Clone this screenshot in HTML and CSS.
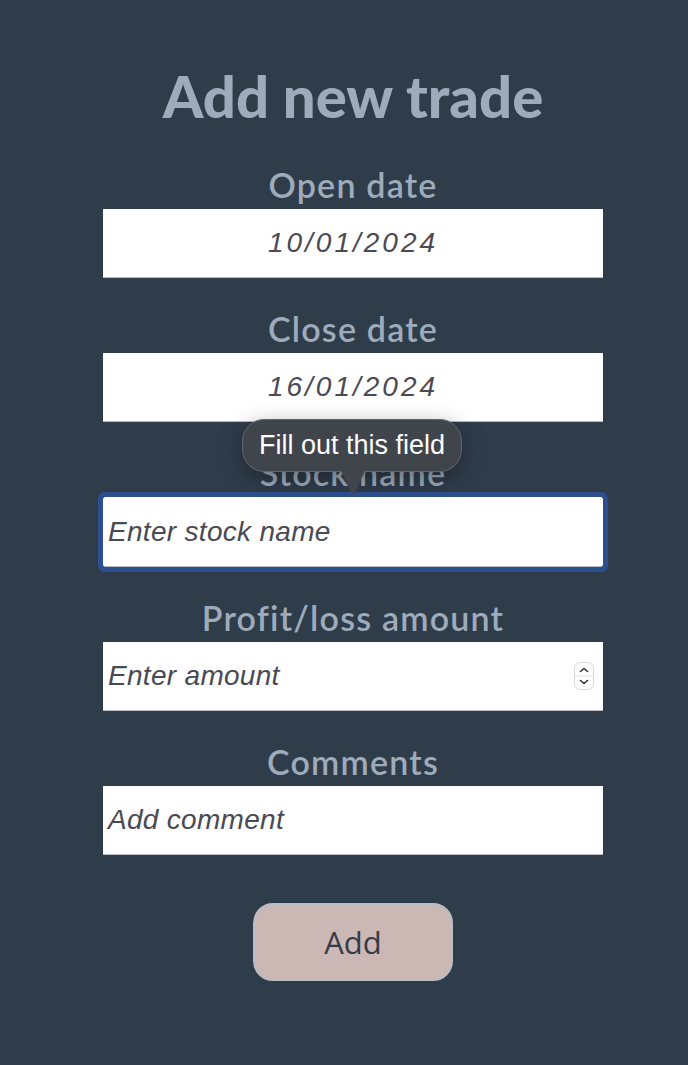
FILE: index.html
```html
<!DOCTYPE html>
<html>
<head>
<meta charset="utf-8">
<link rel="stylesheet" href="styles.css">
</head>
<body>
<main class="page">
  <form class="trade-form">
    <h1 class="title">Add new trade</h1>
    <div class="group">
      <label class="label">Open date</label>
      <div class="field field-date">10/01/2024</div>
    </div>
    <div class="group">
      <label class="label">Close date</label>
      <div class="field field-date">16/01/2024</div>
    </div>
    <div class="group group-tip">
      <label class="label">Stock name</label>
      <div class="field field-focus"><span class="placeholder">Enter stock name</span></div>
      <div class="tooltip"><span>Fill out this field</span><i class="tip-arrow"></i></div>
    </div>
    <div class="group">
      <label class="label">Profit/loss amount</label>
      <div class="field field-num">
        <span class="placeholder">Enter amount</span>
        <span class="spinner">
          <svg width="20" height="28" viewBox="0 0 20 28">
            <rect x="0.5" y="0.5" width="19" height="27" rx="6" fill="#fff" stroke="#d6d6d6"/>
            <line x1="1" y1="14" x2="19" y2="14" stroke="#e2e2e2"/>
            <path d="M6.5 9.5 L10 6.5 L13.5 9.5" fill="none" stroke="#333" stroke-width="1.6" stroke-linecap="round" stroke-linejoin="round"/>
            <path d="M6.5 18.5 L10 21.5 L13.5 18.5" fill="none" stroke="#333" stroke-width="1.6" stroke-linecap="round" stroke-linejoin="round"/>
          </svg>
        </span>
      </div>
    </div>
    <div class="group">
      <label class="label">Comments</label>
      <div class="field"><span class="placeholder">Add comment</span></div>
    </div>
    <button type="button" class="add-btn">Add</button>
  </form>
</main>
</body>
</html>
```

FILE: styles.css
```css
html, body {
  margin: 0;
  padding: 0;
  background: #2f3c4a;
}
.page {
  width: 670px;
  padding-left: 18px;
  padding-top: 60px;
  min-height: 1005px;
}
.trade-form {
  display: flex;
  flex-direction: column;
  align-items: center;
}
.title {
  margin: 0 0 8px 0;
  font-family: "Lato", sans-serif;
  font-weight: 900;
  font-size: 58px;
  line-height: 72px;
  color: #9eabbb;
}
.group {
  position: relative;
  width: 500px;
  display: flex;
  flex-direction: column;
  align-items: center;
  margin-bottom: 6px;
}
.label {
  font-family: "Lato", sans-serif;
  font-weight: 600;
  font-size: 34px;
  line-height: 1;
  height: 69px;
  box-sizing: border-box;
  padding-bottom: 7px;
  display: flex;
  align-items: flex-end;
  color: #9eabbb;
  letter-spacing: 1.2px;
}
.field {
  width: 500px;
  height: 69px;
  box-sizing: border-box;
  background: #fff;
  border-bottom: 1px solid #b9bcc2;
  display: flex;
  align-items: center;
  font-family: "Liberation Sans", Arial, sans-serif;
  font-style: italic;
  font-size: 28px;
  letter-spacing: 0.3px;
  color: #4a4a55;
  padding: 0 5px;
}
.field-date {
  justify-content: center;
  letter-spacing: 3px;
}
.field-focus {
  border-radius: 2px;
  outline: 5px solid #2e4f8f;
  outline-offset: 0;
  height: 70px;
}
.field-num {
  justify-content: space-between;
  padding-right: 9px;
}
.spinner {
  display: flex;
}
.placeholder {
  color: #4a4a55;
}
.tooltip {
  position: absolute;
  left: 139px;
  top: -9px;
  width: 220px;
  height: 53px;
  box-sizing: border-box;
  background: #40454c;
  border: 1px solid #62666d;
  border-radius: 22px;
  box-shadow: 0 6px 22px rgba(0, 0, 0, 0.35);
  display: flex;
  align-items: center;
  justify-content: center;
  font-family: "Liberation Sans", Arial, sans-serif;
  font-size: 27px;
  color: #ffffff;
  z-index: 2;
}
.tip-arrow {
  position: absolute;
  left: 98px;
  top: 51px;
  width: 24px;
  height: 23px;
  background: #40454c;
  clip-path: polygon(0 0, 100% 0, 56% 96%, 50% 100%, 44% 96%);
}
.add-btn {
  margin-top: 42px;
  width: 200px;
  height: 78px;
  background: #cbb7b3;
  border: 2px solid #b9bcc2;
  border-radius: 20px;
  font-family: "Open Sans", sans-serif;
  font-size: 31px;
  color: #353b47;
}
```
